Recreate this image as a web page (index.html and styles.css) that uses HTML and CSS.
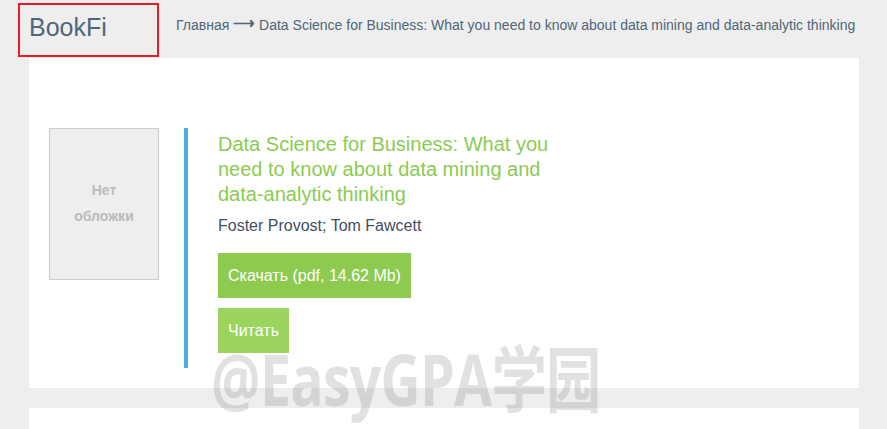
FILE: index.html
```html
<!DOCTYPE html>
<html lang="ru">
<head>
<meta charset="utf-8">
<title>BookFi</title>
<link rel="stylesheet" href="styles.css">
</head>
<body>
<header class="top">
  <div class="logo-box"><a class="logo" href="#">BookFi</a></div>
  <nav class="crumbs"><a href="#">Главная</a> <span class="arrow">⟶</span> <a href="#">Data Science for Business: What you need to know about data mining and data-analytic thinking</a></nav>
</header>
<main>
  <section class="card">
    <div class="book">
      <div class="cover"><span>Нет<br>обложки</span></div>
      <div class="info">
        <h1 class="title">Data Science for Business: What you need to know about data mining and data-analytic thinking</h1>
        <div class="authors">Foster Provost; Tom Fawcett</div>
        <a class="btn btn-dl" href="#">Скачать (pdf, 14.62 Mb)</a>
        <a class="btn btn-read" href="#">Читать</a>
      </div>
    </div>
  </section>
  <section class="card card-next"></section>
</main>
<div class="watermark">@EasyGPA学园</div>
</body>
</html>
```

FILE: styles.css
```css
html, body {
  margin: 0;
  padding: 0;
  background: #eeeeee;
  font-family: "Liberation Sans", Arial, sans-serif;
  overflow: hidden;
  height: 429px;
}
a { text-decoration: none; }

.top {
  display: flex;
  align-items: center;
  height: 58px;
  padding-left: 18px;
}
.logo-box {
  box-sizing: border-box;
  width: 141px;
  height: 54px;
  margin-top: 2px;
  border: 2px solid #ea1c2a;
  padding: 8px 0 0 9px;
}
.logo {
  font-size: 25px;
  color: #4f6679;
  line-height: 28px;
}
.crumbs {
  margin-left: 17px;
  margin-top: -9px;
  font-size: 14px;
  color: #4f6677;
}
.crumbs a { color: #4f6677; }
.arrow {
  font-size: 15px;
  font-weight: bold;
  position: relative;
  top: -2px;
}

.card {
  background: #ffffff;
  margin-left: 29px;
  width: 830px;
  box-sizing: border-box;
  padding: 70px 20px 20px 20px;
}
.card-next {
  margin-top: 20px;
  height: 60px;
  padding: 0;
}
.book {
  display: flex;
  align-items: flex-start;
}
.cover {
  box-sizing: border-box;
  width: 110px;
  height: 152px;
  background: #eeeeee;
  border: 1px solid #cccccc;
  display: flex;
  align-items: center;
  justify-content: center;
  text-align: center;
  font-size: 14px;
  font-weight: bold;
  color: #bbbbbb;
  line-height: 26px;
  padding-bottom: 2px;
}
.info {
  margin-left: 25px;
  border-left: 4px solid #4cb1d6;
  padding-left: 30px;
  padding-bottom: 15px;
  display: flex;
  flex-direction: column;
  align-items: flex-start;
  width: 340px;
}
.title {
  margin: 4px 0 0 0;
  font-size: 20px;
  font-weight: normal;
  line-height: 25px;
  color: #8ccb52;
}
.authors {
  margin-top: 9px;
  font-size: 16px;
  color: #3f4f5e;
  line-height: 20px;
}
.btn {
  display: block;
  color: #ffffff;
  font-size: 16px;
  line-height: 45px;
  height: 45px;
  padding: 0 10px;
}
.btn-dl {
  margin-top: 17px;
  background: #8dca4f;
}
.btn-read {
  margin-top: 10px;
  background: #9bd45f;
}

.watermark {
  position: absolute;
  left: 211px;
  top: 322px;
  font-family: "Open Sans", "Noto Sans CJK SC", sans-serif;
  font-weight: bold;
  font-size: 72px;
  letter-spacing: -1px;
  color: rgba(120, 120, 120, 0.22);
  white-space: nowrap;
  pointer-events: none;
  transform: scaleX(0.77);
  transform-origin: left top;
}
```
